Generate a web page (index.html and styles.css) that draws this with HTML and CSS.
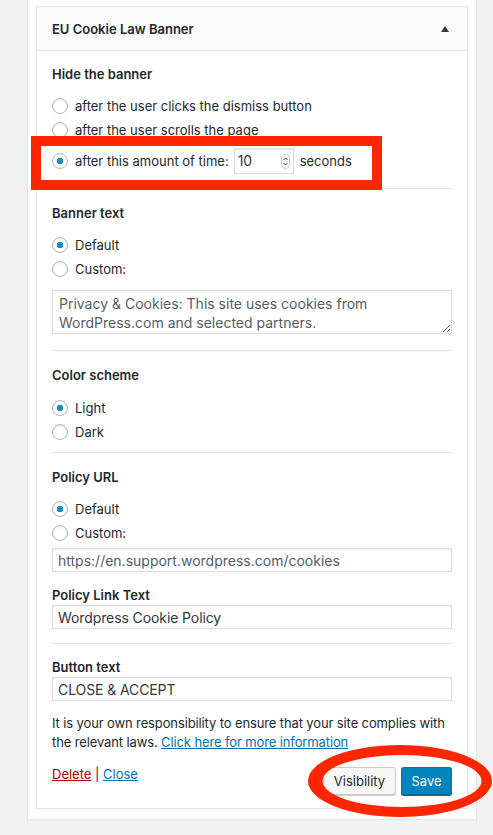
FILE: index.html
```html
<!DOCTYPE html>
<html lang="en">
<head>
<meta charset="utf-8">
<title>EU Cookie Law Banner</title>
<link rel="stylesheet" href="styles.css">
</head>
<body>
<div class="page">
  <div class="sidebar">
    <div class="widget">
      <div class="widget-top">
        <h3 class="widget-title">EU Cookie Law Banner</h3>
        <svg class="toggle" width="8" height="6" viewBox="0 0 8 6"><polygon points="4,0 8,6 0,6" fill="#32373c"/></svg>
      </div>
      <div class="widget-inside">
        <div class="label first">Hide the banner</div>
        <label class="radio-row"><input type="radio" class="radio" name="hide">after the user clicks the dismiss button</label>
        <label class="radio-row"><input type="radio" class="radio" name="hide">after the user scrolls the page</label>
        <label class="radio-row time-row"><input type="radio" class="radio" name="hide" checked>after this amount of time:<span class="number"><span class="number-value">10</span><svg class="spinner" width="9" height="15" viewBox="0 0 9 15"><rect x="0.5" y="0.5" width="8" height="14" rx="4" fill="#fff" stroke="#c8c8c8"/><path d="M2.6 6 L4.5 4 L6.4 6" fill="none" stroke="#444" stroke-width="1"/><path d="M2.6 9 L4.5 11 L6.4 9" fill="none" stroke="#444" stroke-width="1"/></svg></span>seconds</label>
        <hr class="sep sep-1">

        <div class="label">Banner text</div>
        <label class="radio-row"><input type="radio" class="radio" name="text" checked>Default</label>
        <label class="radio-row"><input type="radio" class="radio" name="text">Custom:</label>
        <textarea class="textarea">Privacy &amp; Cookies: This site uses cookies from WordPress.com and selected partners.</textarea>
        <hr class="sep sep-2">

        <div class="label label-wide">Color scheme</div>
        <label class="radio-row"><input type="radio" class="radio" name="color" checked>Light</label>
        <label class="radio-row"><input type="radio" class="radio" name="color">Dark</label>
        <hr class="sep sep-3">

        <div class="label">Policy URL</div>
        <label class="radio-row"><input type="radio" class="radio" name="url" checked>Default</label>
        <label class="radio-row"><input type="radio" class="radio" name="url">Custom:</label>
        <input type="text" class="text-input url-input" value="https://en.support.wordpress.com/cookies">
        <div class="label tight">Policy Link Text</div>
        <input type="text" class="text-input field-input" value="Wordpress Cookie Policy">
        <hr class="sep sep-4">

        <div class="label tight">Button text</div>
        <input type="text" class="text-input field-input" value="CLOSE &amp; ACCEPT">
        <p class="note">It is your own responsibility to ensure that your site complies with the relevant laws. <a class="link" href="#">Click here for more information</a></p>

        <div class="actions">
          <div class="action-links"><a class="link-delete" href="#">Delete</a> | <a class="link" href="#">Close</a></div>
          <div class="action-buttons">
            <button class="btn btn-visibility">Visibility</button>
            <button class="btn btn-save">Save</button>
          </div>
        </div>
      </div>
    </div>
  </div>

  <div class="annot-rect"></div>
  <svg class="annot-ellipse" width="493" height="835" viewBox="0 0 493 835">
    <path fill="#ff2600" fill-rule="evenodd" d="M308,781 a92,36 0 1,0 184,0 a92,36 0 1,0 -184,0 Z M322.5,781 a79.5,26 0 1,0 159,0 a79.5,26 0 1,0 -159,0 Z"/>
  </svg>
</div>
</body>
</html>
```

FILE: styles.css
```css
html, body {
  margin: 0;
  padding: 0;
}

body {
  background: #f1f1f1;
  font-family: Inter, "Liberation Sans", Arial, sans-serif;
  font-size: 13px;
  color: #23282d;
  width: 493px;
  height: 835px;
  overflow: hidden;
}

.page {
  position: relative;
  width: 493px;
  height: 835px;
}

.sidebar {
  margin-left: 27px;
  width: 450px;
  box-sizing: border-box;
  background: #fff;
  border: 1px solid #e5e5e5;
  border-top: none;
  padding: 6px 8px 10px 8px;
}

.widget {
  border: 1px solid #e5e5e5;
  box-shadow: 0 1px 1px rgba(0, 0, 0, 0.04);
  background: #fff;
}

.widget-top {
  height: 43px;
  background: #fafafa;
  border-bottom: 1px solid #e5e5e5;
  display: flex;
  align-items: center;
  justify-content: space-between;
  padding: 0 18px 0 15px;
}

.widget-title {
  margin: 0;
  font-size: 13px;
  font-weight: 600;
  line-height: 18px;
  color: #23282d;
}

.toggle {
  display: block;
}

.widget-inside {
  padding: 0 15px 13px 15px;
  display: flex;
  flex-direction: column;
}

.label {
  font-weight: 600;
  line-height: 18px;
  margin-top: 15px;
  margin-bottom: 11px;
}

.label.first {
  margin-top: 14px;
}

.label.label-wide {
  margin-bottom: 12px;
}

.label.tight {
  margin-top: 14px;
  margin-bottom: 1px;
}

.radio-row {
  display: flex;
  align-items: center;
  height: 24px;
  line-height: 18px;
  white-space: nowrap;
}

.radio {
  -webkit-appearance: none;
  appearance: none;
  width: 16px;
  height: 16px;
  margin: 0 7px 0 0;
  border: 1px solid #b4b9be;
  border-radius: 50%;
  background: #fff;
  box-shadow: inset 0 1px 2px rgba(0, 0, 0, 0.1);
  flex: none;
}

.radio:checked {
  background: radial-gradient(circle at center, #1e8cbe 0, #1e8cbe 3px, #fff 3.6px);
}

.time-row {
  height: 26px;
  margin-top: 6px;
}

.number {
  display: flex;
  align-items: center;
  justify-content: space-between;
  box-sizing: border-box;
  width: 60px;
  height: 26px;
  margin: 0 6px 0 5px;
  padding: 0 3px 0 3px;
  border: 1px solid #ddd;
  box-shadow: inset 0 1px 2px rgba(0, 0, 0, 0.07);
  font-size: 14px;
  color: #32373c;
}

.spinner {
  display: block;
}

.sep {
  border: 0;
  border-top: 1px solid #ddd;
  height: 0;
  margin: 0;
}

.sep-1 { margin-top: 14px; }
.sep-2 { margin-top: 16px; }
.sep-3 { margin-top: 8px; }
.sep-4 { margin-top: 14px; }

.textarea {
  box-sizing: border-box;
  width: 100%;
  height: 44px;
  margin: 9px 0 0 0;
  padding: 3px 6px;
  border: 1px solid #ddd;
  box-shadow: inset 0 1px 2px rgba(0, 0, 0, 0.07);
  font-family: Inter, "Liberation Sans", Arial, sans-serif;
  font-size: 14px;
  line-height: 19px;
  color: #555d66;
  background: #fff;
  overflow: hidden;
}

.text-input {
  box-sizing: border-box;
  width: 100%;
  height: 24px;
  padding: 0 5px;
  border: 1px solid #ddd;
  box-shadow: inset 0 1px 2px rgba(0, 0, 0, 0.07);
  font-family: Inter, "Liberation Sans", Arial, sans-serif;
  font-size: 14px;
  color: #32373c;
  background: #fff;
  outline: none;
}

.field-input {
  letter-spacing: -0.1px;
}

.url-input {
  margin-top: 3px;
  color: #555d66;
}

.note {
  margin: 13px 0 0 0;
  line-height: 19px;
  letter-spacing: -0.12px;
}

.link {
  color: #0073aa;
  text-decoration: underline;
}

.link-delete {
  color: #a00;
  text-decoration: underline;
}

.actions {
  display: flex;
  justify-content: space-between;
  align-items: flex-start;
  margin-top: 13px;
}

.action-links {
  line-height: 18px;
}

.action-buttons {
  display: flex;
  gap: 5px;
  margin-top: 2px;
}

.btn {
  box-sizing: border-box;
  height: 28px;
  padding: 0 0 1px 0;
  border-radius: 3px;
  font-family: Inter, "Liberation Sans", Arial, sans-serif;
  font-size: 13px;
  line-height: 26px;
  text-align: center;
  cursor: pointer;
}

.btn-visibility {
  width: 73px;
  background: #f7f7f7;
  border: 1px solid #ccc;
  box-shadow: 0 1px 0 #ccc;
  color: #23282d;
}

.btn-save {
  width: 51px;
  background: #0085ba;
  border: 1px solid #0073aa;
  border-bottom-color: #006799;
  box-shadow: 0 1px 0 #006799;
  color: #fff;
}

.annot-rect {
  position: absolute;
  left: 31px;
  top: 136px;
  width: 351px;
  height: 54px;
  box-sizing: border-box;
  border: 10px solid #ff2600;
  pointer-events: none;
}

.annot-ellipse {
  position: absolute;
  left: 0;
  top: 0;
  pointer-events: none;
}
```
